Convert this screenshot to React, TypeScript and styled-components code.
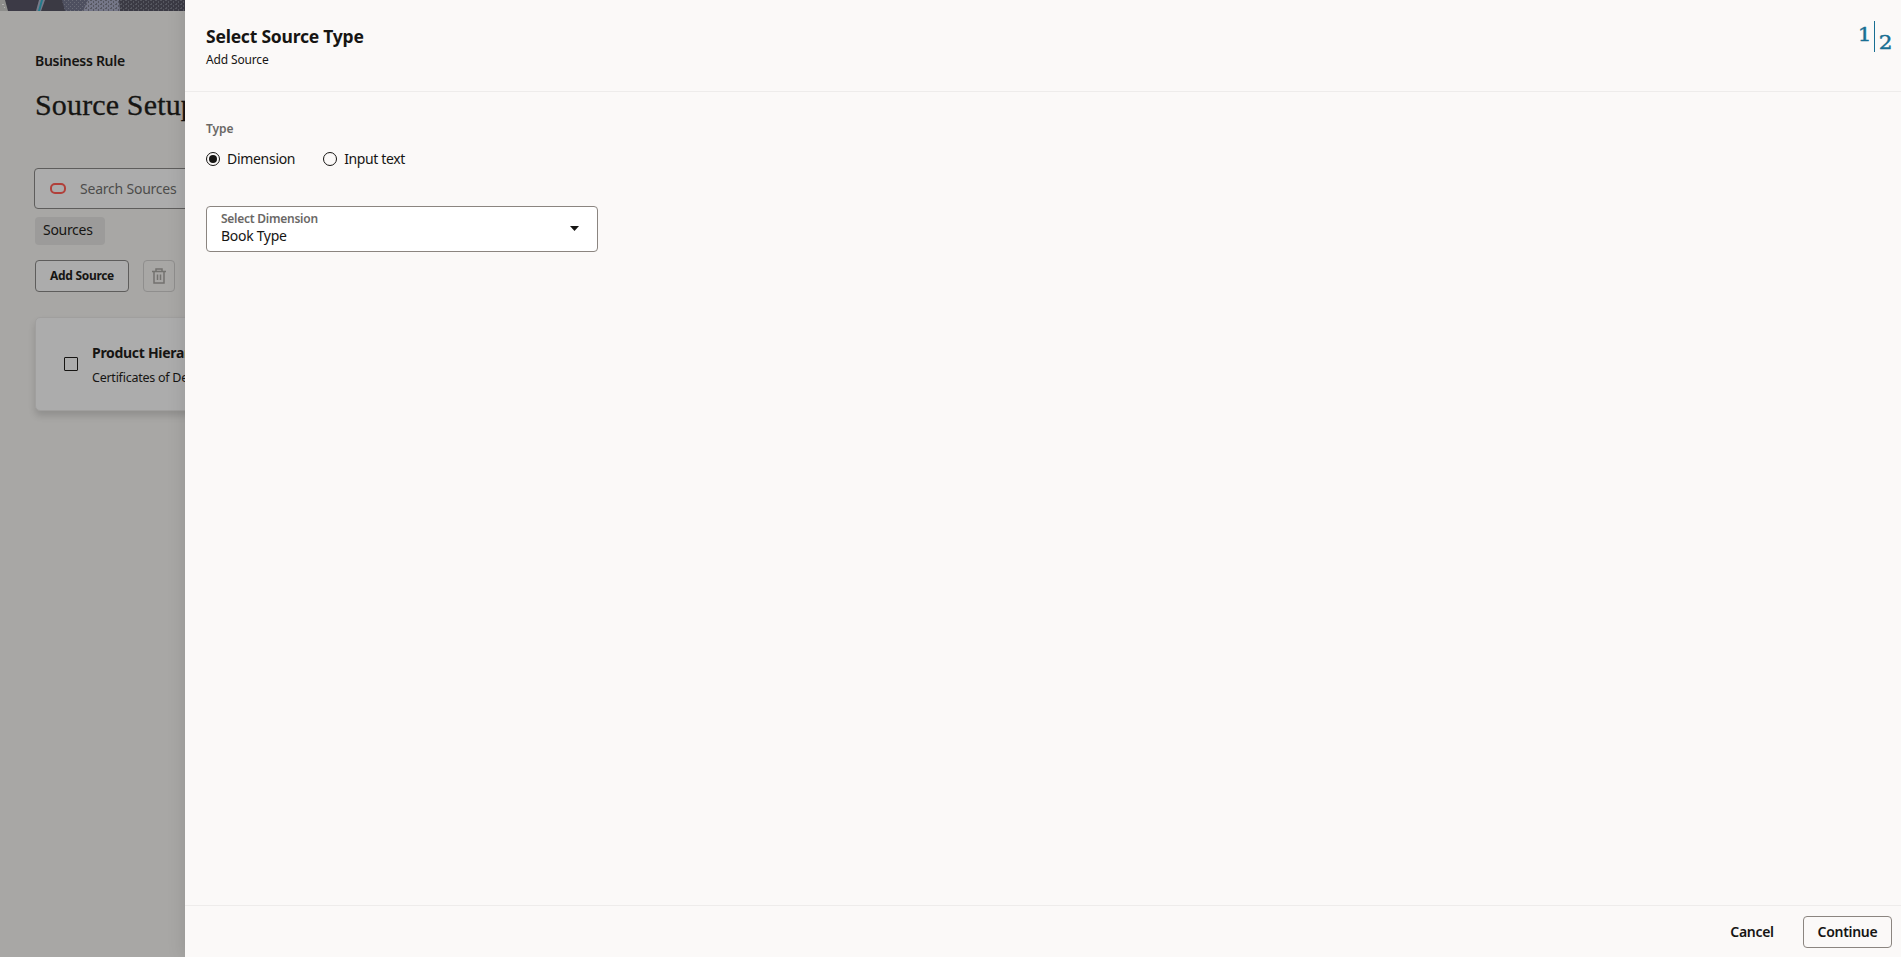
import React from "react";
import styled, { createGlobalStyle } from "styled-components";

const Global = createGlobalStyle`
  * { box-sizing: border-box; }
  html, body { margin: 0; height: 100%; overflow: hidden; }
  body { font-family: "Noto Sans", "Open Sans", sans-serif; color: #161513; }
  button { font-family: inherit; color: inherit; cursor: pointer; }
`;

const Screen = styled.div`
  position: relative;
  display: flex;
  width: 100vw;
  height: 100vh;
  background: #a8a7a5;
  overflow: hidden;
`;

const Page = styled.main`
  width: 185px;
  flex: none;
  overflow: hidden;
  white-space: nowrap;
  display: flex;
  flex-direction: column;
`;

const Banner = styled.svg`
  display: block;
  flex: none;
  width: 185px;
  height: 11px;
`;

const PageBody = styled.div`
  width: 600px;
  padding: 39px 0 0 35px;
  display: flex;
  flex-direction: column;
  align-items: flex-start;
`;

const Text = styled.span<{ $size: number; $line?: number; $weight?: number; $color?: string; $track?: number }>`
  display: block;
  white-space: nowrap;
  font-size: ${(p) => p.$size}px;
  line-height: ${(p) => p.$line ?? 20}px;
  font-weight: ${(p) => p.$weight ?? 400};
  color: ${(p) => p.$color ?? "#161513"};
  letter-spacing: ${(p) => p.$track ?? 0}px;
`;

const PageTitle = styled.h1`
  margin: 15px 0 0;
  font: 400 30px/36px "Liberation Serif", serif;
  letter-spacing: 0.15px;
  -webkit-text-stroke: 0.3px #161513;
`;

const SearchBox = styled.div`
  margin: 45px 0 0 -1px;
  width: 560px;
  height: 41px;
  border: 1px solid #5e5d5c;
  border-radius: 4px;
  background: #acacac;
  display: flex;
  align-items: center;
  padding-left: 15px;
  gap: 14px;
`;

const Oval = styled.span`
  width: 16px;
  height: 11px;
  margin-top: -1px;
  border: 2px solid #b1403a;
  border-radius: 5px;
`;

const Chip = styled.div`
  margin-top: 8px;
  height: 28px;
  width: 70px;
  padding: 2px 0 0 8px;
  border-radius: 4px;
  background: #9c9b9a;
`;

const Toolbar = styled.div`
  margin-top: 15px;
  display: flex;
  gap: 14px;
`;

const Button = styled.button<{ $width: number; $border: string; $fill?: string }>`
  display: flex;
  align-items: center;
  justify-content: center;
  padding: 0;
  width: ${(p) => p.$width}px;
  height: 32px;
  border: 1px solid ${(p) => p.$border};
  border-radius: 4px;
  background: ${(p) => p.$fill ?? "transparent"};
`;

const Card = styled.article`
  margin-top: 25px;
  width: 560px;
  height: 94px;
  border: 1px solid #a09f9e;
  border-radius: 5px;
  background: #acacac;
  box-shadow: 0 5px 7px rgba(0, 0, 0, 0.14);
  display: flex;
  padding: 25px 0 0 28px;
  gap: 14px;
`;

const Checkbox = styled.span`
  width: 14px;
  height: 14px;
  margin-top: 14px;
  border: 1px solid #161513;
  border-radius: 1px;
`;

const CardText = styled.div`
  display: flex;
  flex-direction: column;
  gap: 5px;
`;

const Drawer = styled.section`
  position: relative;
  flex: 1;
  background: #fbf9f8;
  box-shadow: -2px 0 16px rgba(0, 0, 0, 0.1);
  display: flex;
  flex-direction: column;
`;

const DrawerHeader = styled.header`
  height: 92px;
  border-bottom: 1px solid #eeeceb;
  padding: 21px 9px 0 21px;
  display: flex;
  justify-content: space-between;
`;

const Titles = styled.div`
  padding-top: 3px;
  display: flex;
  flex-direction: column;
  gap: 2px;
`;

const Steps = styled.div`
  display: flex;
  height: 31px;
  color: #176e92;
  font: 18px/20px "DejaVu Serif", serif;
`;

const Digit = styled.span`
  display: block;
  transform: scaleX(1.2);
  -webkit-text-stroke: 0.4px #176e92;
`;

const Current = styled.span`
  padding: 4px 3px 0 0;
`;

const Total = styled.span`
  padding: 12px 1px 0 5px;
  border-left: 1px solid #176e92;
`;

const DrawerBody = styled.div`
  flex: 1;
  padding: 27px 0 0 21px;
`;

const Radios = styled.div`
  margin-top: 10px;
  display: flex;
  gap: 28px;
`;

const RadioLabel = styled.label`
  display: flex;
  align-items: center;
  gap: 7px;
`;

const RadioMark = styled.span<{ $on?: boolean }>`
  width: 14px;
  height: 14px;
  border: 1px solid #161513;
  border-radius: 50%;
  display: grid;
  place-items: center;
  &::after {
    content: "";
    width: 8px;
    height: 8px;
    border-radius: 50%;
    background: ${(p) => (p.$on ? "#161513" : "transparent")};
  }
`;

const Select = styled.div`
  margin-top: 37px;
  width: 392px;
  height: 46px;
  border: 1px solid #8b8580;
  border-radius: 4px;
  background: #fff;
  padding: 3px 18px 0 14px;
  display: flex;
  justify-content: space-between;
`;

const Caret = styled.svg`
  margin-top: 16px;
`;

const Footer = styled.footer`
  height: 52px;
  border-top: 1px solid #eeeceb;
  padding: 10px 9px 0 0;
  display: flex;
  justify-content: flex-end;
  gap: 15px;
`;

function BannerArt() {
  return (
    <Banner viewBox="0 0 185 11">
      <defs>
        <pattern id="grain" width="4" height="4" patternUnits="userSpaceOnUse">
          <path d="M0 0h1v1H0zM2 2h1v1H2z" fill="#696b76" />
        </pattern>
        <pattern id="weave" width="5" height="4" patternUnits="userSpaceOnUse">
          <path d="M0 0h2v1H0zM3 1h1v2H3zM1 3h1v1H1z" fill="#55565f" />
        </pattern>
      </defs>
      <path d="M0 0h185v11H0z" fill="#3b3a44" />
      <path d="M0 0h5l3 11H0z" fill="#8e8e8c" />
      <path d="M2 4h2v1H2zM4 7h1v1H4z" fill="#b4b4b2" />
      <path d="M8 0h30l-3 11H9z" fill="#3c3a46" />
      <path d="M39 0h6l-4 11h-5z" fill="#777b8a" />
      <path d="M41 0h2l-3 11h-2z" fill="#237b8b" />
      <path d="M62 0h28l-7 11H65z" fill="#4e5060" />
      <path d="M62 0h28l-7 11H65z" fill="url(#grain)" />
      <path d="M88 0h31l1 11H83z" fill="#747687" />
      <path d="M88 0h31l1 11H83z" fill="url(#weave)" />
      <path d="M119 0h66v11h-65z" fill="url(#weave)" />
    </Banner>
  );
}

function TrashIcon() {
  return (
    <svg width="14" height="16" viewBox="0 0 14 16" fill="none" stroke="#73726f" strokeWidth="1.5">
      <path d="M0 3.5h14M4 3.5V1h6v2.5M2 3.5V15h10V3.5M5.5 6.5v5.5M8.5 6.5v5.5" />
    </svg>
  );
}

export default function App() {
  return (
    <Screen>
      <Global />
      <Page>
        <BannerArt />
        <PageBody>
          <Text $size={14} $weight={600} $track={-0.3} $line={22}>Business Rule</Text>
          <PageTitle>Source Setup</PageTitle>
          <SearchBox>
            <Oval />
            <Text $size={14} $color="#4d4c4b" $track={-0.22}>Search Sources</Text>
          </SearchBox>
          <Chip><Text $size={14} $track={-0.3} $line={22}>Sources</Text></Chip>
          <Toolbar>
            <Button $width={94} $border="#5e5d5c" $fill="#acacac">
              <Text $size={12} $weight={700} $track={-0.3} $line={18}>Add Source</Text>
            </Button>
            <Button $width={32} $border="#8f8e8d" aria-label="Delete"><TrashIcon /></Button>
          </Toolbar>
          <Card>
            <Checkbox />
            <CardText>
              <Text $size={14} $weight={700} $track={-0.3}>Product Hierarchy</Text>
              <Text $size={12.5} $track={-0.25}>Certificates of Deposit</Text>
            </CardText>
          </Card>
        </PageBody>
      </Page>
      <Drawer>
        <DrawerHeader>
          <Titles>
            <Text $size={17.5} $weight={700} $track={-0.22} $line={24}>Select Source Type</Text>
            <Text $size={12} $track={-0.15}>Add Source</Text>
          </Titles>
          <Steps>
            <Current><Digit>1</Digit></Current>
            <Total><Digit>2</Digit></Total>
          </Steps>
        </DrawerHeader>
        <DrawerBody>
          <Text $size={12} $weight={600} $color="#6a6866" $track={-0.1}>Type</Text>
          <Radios>
            <RadioLabel><RadioMark $on /><Text $size={14} $track={-0.3}>Dimension</Text></RadioLabel>
            <RadioLabel><RadioMark /><Text $size={14} $track={-0.38}>Input text</Text></RadioLabel>
          </Radios>
          <Select>
            <div>
              <Text $size={12} $weight={600} $color="#6a6866" $line={18} $track={-0.25}>Select Dimension</Text>
              <Text $size={14} $line={16} $track={-0.3}>Book Type</Text>
            </div>
            <Caret width="9" height="5" viewBox="0 0 9 5"><path d="M0 0h9L4.5 5z" fill="#161513" /></Caret>
          </Select>
        </DrawerBody>
        <Footer>
          <Button $width={72} $border="transparent"><Text $size={14} $weight={600} $track={-0.3}>Cancel</Text></Button>
          <Button $width={89} $border="#8b8580"><Text $size={14} $weight={600} $track={-0.3}>Continue</Text></Button>
        </Footer>
      </Drawer>
    </Screen>
  );
}
